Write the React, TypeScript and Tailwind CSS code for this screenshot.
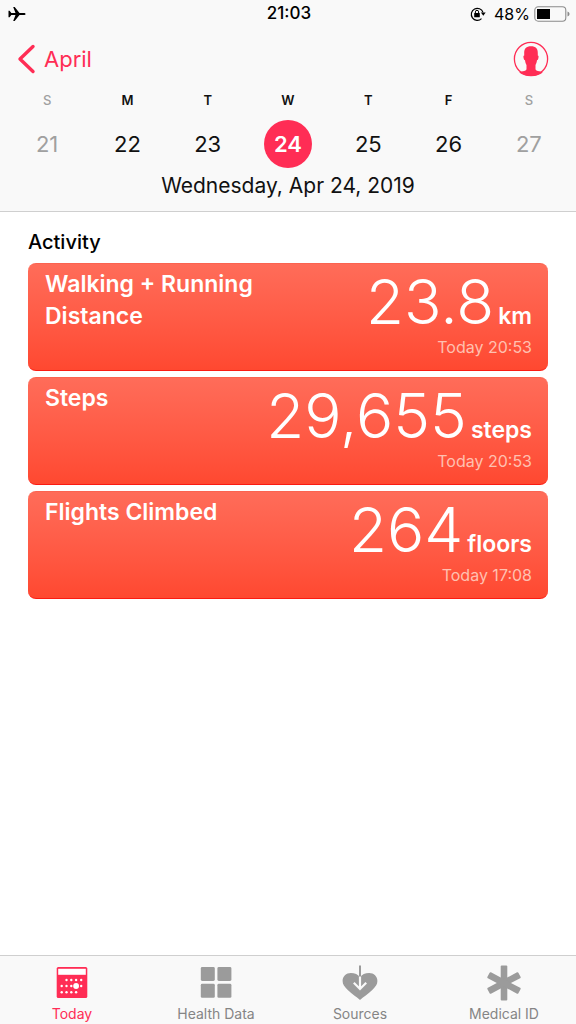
import React from "react";

type Day = { letter: string; name: string; date: number; weekend?: boolean; selected?: boolean };

const days: Day[] = [
  { letter: "S", name: "Sunday", date: 21, weekend: true },
  { letter: "M", name: "Monday", date: 22 },
  { letter: "T", name: "Tuesday", date: 23 },
  { letter: "W", name: "Wednesday", date: 24, selected: true },
  { letter: "T", name: "Thursday", date: 25 },
  { letter: "F", name: "Friday", date: 26 },
  { letter: "S", name: "Saturday", date: 27, weekend: true },
];

const activities = [
  { title: "Walking + Running Distance", value: "23.8", unit: "km", time: "Today 20:53" },
  { title: "Steps", value: "29,655", unit: "steps", time: "Today 20:53" },
  { title: "Flights Climbed", value: "264", unit: "floors", time: "Today 17:08" },
];

function AirplaneIcon() {
  return (
    <svg width="18" height="16" viewBox="0 0 18 16" fill="#000" aria-hidden="true">
      <path d="M17.6 8c0 .7-.8 1.1-1.8 1.1h-4.3L6.7 15H5.2l2.3-5.9H3.3L1.6 11.2H.5V4.800h1.100l1.700 2.100h4.200L5.200 1h1.500l4.800 5.900h4.300c1 0 1.800.4 1.800 1.100Z" />
    </svg>
  );
}

function RotationLockIcon() {
  return (
    <svg width="16" height="16" viewBox="0 0 16 16" fill="none" aria-hidden="true">
      <path d="M11.5 12.6A6 6 0 1 1 13 6.4" stroke="#000" strokeWidth="1.2" />
      <path d="M10.9 6.6h4.8l-2.400 3.200Z" fill="#000" />
      <rect x="4.200" y="7" width="5.600" height="4.200" rx=".5" fill="#000" />
      <path d="M5.400 7.200V5.900a1.600 1.600 0 0 1 3.200 0v1.300" stroke="#000" strokeWidth="1" />
    </svg>
  );
}

function BatteryIcon() {
  return (
    <svg width="36" height="16" viewBox="0 0 36 16" fill="none" aria-hidden="true">
      <rect x=".8" y=".8" width="31" height="14.400" rx="3.400" stroke="#8b8b8b" strokeWidth="1.100" />
      <rect x="3" y="3" width="13" height="10" fill="#000" />
      <path d="M33.500 5.500c1.400.5 2 1.400 2 2.500s-.6 2-2 2.500Z" fill="#8b8b8b" />
    </svg>
  );
}

function ProfileIcon() {
  return (
    <svg width="36" height="36" viewBox="0 0 36 36" fill="none" aria-hidden="true">
      <circle cx="18" cy="18" r="16.600" stroke="#ff2d55" strokeWidth="1.300" />
      <path
        fill="#ff2d55"
        d="M18 5.200c4.700 0 7 2.500 6.800 7.200v2.200c.9.1.9 1.200.6 2.400-.3 1.300-.7 2.300-1.400 2.300-.3 2.200-.8 3.600-1.500 4.600v4c.2 1.400 1.400 1.800 3.800 2.400 1.600.4 2.700.7 3.500 1.300A17 17 0 0 1 18 35a17 17 0 0 1-11.800-3.400c.8-.6 1.900-.9 3.500-1.300 2.400-.6 3.600-1 3.800-2.400v-4c-.7-1-1.200-2.400-1.500-4.600-.7 0-1.100-1-1.400-2.300-.3-1.200-.3-2.300.6-2.400v-2.200c-.2-4.700 2.100-7.200 6.800-7.200Z"
      />
    </svg>
  );
}

const calendarDots = [
  [10.5, 13], [15.3, 13], [20.1, 13], [25.2, 13],
  [5.7, 19], [10.5, 19], [15.3, 19], [25.2, 19],
  [5.7, 25.2], [10.5, 25.2], [15.3, 25.2], [20.1, 25.2],
];

function CalendarIcon() {
  return (
    <svg width="32" height="32" viewBox="0 0 32 32" aria-hidden="true">
      <rect x=".7" y="0" width="30.600" height="31" rx="1.600" fill="#ff2d55" />
      <rect x="2.200" y="1.800" width="27.600" height="6" fill="#fff" />
      {calendarDots.map(([x, y]) => (
        <circle key={`${x}-${y}`} cx={x} cy={y} r="1.200" fill="#fff" />
      ))}
      <circle cx="20.100" cy="19" r="2.900" fill="#fff" />
    </svg>
  );
}

function GridIcon() {
  return (
    <svg width="32" height="32" viewBox="0 0 32 32" fill="#9b9b9b" aria-hidden="true">
      <rect x=".8" y="0" width="14" height="14" rx="1.400" />
      <rect x="17.400" y="0" width="14" height="14" rx="1.400" />
      <rect x=".8" y="16.800" width="14" height="14" rx="1.400" />
      <rect x="17.400" y="16.800" width="14" height="14" rx="1.400" />
    </svg>
  );
}

function HeartDownIcon() {
  return (
    <svg width="36" height="36" viewBox="0 0 36 36" fill="none" aria-hidden="true">
      <path
        fill="#9b9b9b"
        d="M18 35C15 32 9.800 29.200 5.500 24.800 2.500 21.700.6 19.500.6 16c0-4.700 3.600-8 8.200-8 4 0 7.400 1.600 9.200 4.200C19.800 9.600 23.200 8 27.200 8c4.600 0 8.200 3.300 8.200 8 0 3.500-1.900 5.700-4.900 8.800C26.200 29.200 21 32 18 35Z"
      />
      <path d="M18 11v12.500M11.800 17.800 18 24l6.200-6.200" stroke="#f9f9f9" strokeWidth="2.200" />
      <path d="M18 .5v11" stroke="#9b9b9b" strokeWidth="2" />
    </svg>
  );
}

function MedicalIcon() {
  return (
    <svg width="34" height="36" viewBox="0 0 34 36" fill="#9b9b9b" aria-hidden="true">
      <rect x="13.700" y=".5" width="6.600" height="35" rx="1" />
      <rect x="13.700" y=".5" width="6.600" height="35" rx="1" transform="rotate(62 17 18)" />
      <rect x="13.700" y=".5" width="6.600" height="35" rx="1" transform="rotate(-62 17 18)" />
    </svg>
  );
}

const tabs = [
  { label: "Today", icon: <CalendarIcon />, active: true },
  { label: "Health Data", icon: <GridIcon />, active: false },
  { label: "Sources", icon: <HeartDownIcon />, active: false },
  { label: "Medical ID", icon: <MedicalIcon />, active: false },
];

export default function App() {
  return (
    <div className="flex min-h-screen flex-col bg-white font-['Inter','Liberation_Sans',sans-serif] text-black">
      <header className="border-b border-[#cfcfcf] bg-[#f9f9f9]">
        <div className="grid h-7 grid-cols-3 items-center pr-1.5 pl-2 text-[17px]">
          <AirplaneIcon />
          <time className="text-center font-medium">21:03</time>
          <div className="flex items-center justify-end">
            <RotationLockIcon />
            <span className="mr-1 ml-2 text-base">48%</span>
            <BatteryIcon />
          </div>
        </div>

        <div className="flex h-[62px] items-center justify-between pr-[27px] pl-4 text-[#ff2d55]">
          <button type="button" className="flex items-center gap-2 text-[22px] leading-7">
            <svg width="20" height="30" viewBox="0 0 20 30" fill="none" aria-hidden="true">
              <path d="M17 2.500 4 15l13 12.500" stroke="currentColor" strokeWidth="3.400" strokeLinecap="round" strokeLinejoin="round" />
            </svg>
            April
          </button>
          <button type="button" aria-label="Profile">
            <ProfileIcon />
          </button>
        </div>

        <div className="grid grid-cols-7 px-[7px] pt-0.5">
          {days.map((day) => (
            <button
              key={day.date}
              type="button"
              aria-label={`${day.name} ${day.date}`}
              aria-pressed={!!day.selected}
              className={`flex flex-col items-center gap-3 ${day.weekend ? "text-[#a0a0a0]" : "text-[#111]"}`}
            >
              <span className={`text-[13px] leading-4 ${day.weekend ? "font-medium" : "font-semibold"}`}>{day.letter}</span>
              <span
                className={`flex size-12 items-center justify-center rounded-full text-[22px] leading-7 ${
                  day.selected ? "bg-[#ff2d55] font-semibold text-white" : ""
                }`}
              >
                {day.date}
              </span>
            </button>
          ))}
        </div>
        <p className="pt-1 pb-[11px] text-center text-[21px] leading-7 text-[#111]">Wednesday, Apr 24, 2019</p>
      </header>

      <main className="flex-1 px-7 pt-4">
        <h1 className="mb-[7px] text-xl leading-7 font-medium">Activity</h1>
        <div className="flex flex-col gap-1.5">
          {activities.map((item) => (
            <button
              key={item.title}
              type="button"
              className="flex h-[108px] items-start justify-between rounded-lg border-t border-b border-t-[#fb6350] border-b-[#fb1b12] bg-linear-to-b from-[#ff6c59] to-[#ff4830] pr-4 pl-[17px] text-left text-white"
            >
              <span className="w-56 pt-1 text-[23px] leading-8 font-semibold">{item.title}</span>
              <span className="flex flex-col items-end">
                <span className="flex items-baseline gap-1">
                  <span className="text-[62px] leading-[75px] font-light">{item.value}</span>
                  <span className="text-[23px] font-semibold">{item.unit}</span>
                </span>
                <span className="text-base leading-4 text-[#ffc0b0]">{item.time}</span>
              </span>
            </button>
          ))}
        </div>
      </main>

      <nav className="grid h-[69px] grid-cols-4 border-t border-[#cfcfcf] bg-[#f9f9f9]">
        {tabs.map((tab) => (
          <button
            key={tab.label}
            type="button"
            aria-current={tab.active ? "page" : undefined}
            className={`flex flex-col items-center pt-2 text-sm leading-4 ${
              tab.active ? "text-[#ff2d55]" : "text-[#858585]"
            }`}
          >
            <span className="flex h-[42px] items-center justify-center pb-1">{tab.icon}</span>
            {tab.label}
          </button>
        ))}
      </nav>
    </div>
  );
}
